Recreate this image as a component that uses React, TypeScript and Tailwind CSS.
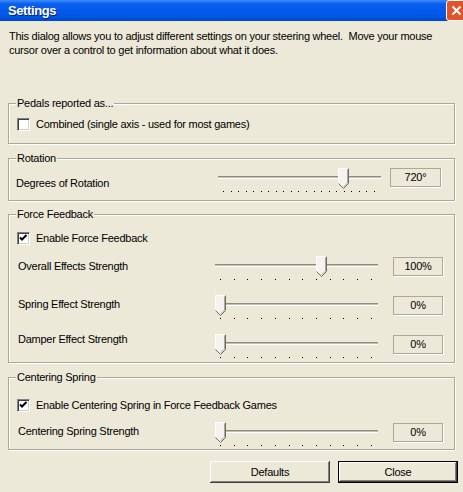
import type { ReactNode } from 'react';

function Thumb() {
  return (
    <svg width="11" height="21" viewBox="0 0 11 21">
      <path d="M0.5 0.5 H10.5 V15.5 L5.5 20.5 L0.5 15.5 Z" fill="#f4f3ee" />
      <path d="M0.5 15.5 V0.5 H10.5" fill="none" stroke="#ffffff" />
      <path d="M10.5 0.5 V15.5 L5.5 20.5 L0.5 15.5" fill="none" stroke="#716f64" />
      <path d="M9.5 1.5 V15 L5.5 19" fill="none" stroke="#aca899" />
    </svg>
  );
}

function Slider({ frac, ticks }: { frac: number; ticks: number }) {
  return (
    <div className="relative w-[163px] h-[25px] shrink-0">
      <div className="absolute left-0 right-0 top-[8px] h-[3px] border-t border-t-[#8e8c80] bg-[#c4c1b2] border-b border-b-white" />
      <div className="absolute top-0" style={{ left: Math.round(frac * 152) }}>
        <Thumb />
      </div>
      <div className="absolute left-[5px] right-[6px] top-[23px] flex justify-between">
        {Array.from({ length: ticks }).map((_, i) => (
          <span key={i} className="block w-px h-px bg-black" />
        ))}
      </div>
    </div>
  );
}

function ValueBox({ children }: { children: ReactNode }) {
  return (
    <div className="h-[19px] border border-[#aca899] shadow-[1px_1px_0_#ffffff] flex items-center justify-center leading-none shrink-0">
      {children}
    </div>
  );
}

function CheckBox({ checked }: { checked?: boolean }) {
  return (
    <span className="block w-[13px] h-[13px] bg-white border-t border-l border-t-[#808080] border-l-[#808080] border-b border-r border-b-white border-r-white shadow-[inset_1px_1px_0_#404040,inset_-1px_-1px_0_#d4d0c8] shrink-0">
      {checked && (
        <svg width="11" height="11" viewBox="0 0 11 11">
          <path d="M2 4.5 L4 6.5 L8.5 2" fill="none" stroke="#000" strokeWidth="2" />
        </svg>
      )}
    </span>
  );
}

function Group({ title, className, children }: { title: string; className: string; children: ReactNode }) {
  return (
    <div className={`relative border border-[#aca899] shadow-[1px_1px_0_#ffffff,inset_1px_1px_0_#ffffff] ${className}`}>
      <span className="absolute -top-[8px] left-[7px] px-[1px] bg-[#ece9d8] leading-[14px]">{title}</span>
      {children}
    </div>
  );
}

export default function App() {
  return (
    <div className="w-[463px] h-[492px] bg-[#ece9d8] flex flex-col overflow-hidden text-[11px] tracking-[-0.25px] text-black font-['Liberation_Sans',Arial,sans-serif]">
      {/* Title bar */}
      <div className="h-[21px] shrink-0 flex items-center justify-between pl-[8px] bg-[linear-gradient(180deg,#3d8cff_0%,#0a5ff0_18%,#0055e5_80%,#0047c9_100%)]">
        <span className="text-white font-bold text-[13px] tracking-[-0.4px] [text-shadow:1px_1px_0_#0a1e80]">Settings</span>
        <div className="w-[21px] h-[21px] mr-[-4px] rounded-[3px] border border-white bg-[#e2532b] flex items-center justify-center">
          <svg width="11" height="11" viewBox="0 0 11 11">
            <path d="M1.5 1.5 L9.5 9.5 M9.5 1.5 L1.5 9.5" stroke="#fff" strokeWidth="2" />
          </svg>
        </div>
      </div>

      <div className="flex flex-col px-[8px]">
        <p className="mt-[8px] pl-[1px] leading-[14px] whitespace-nowrap">
          This dialog allows you to adjust different settings on your steering wheel.&nbsp; Move your mouse
          <br />
          cursor over a control to get information about what it does.
        </p>

        {/* Pedals */}
        <Group title="Pedals reported as..." className="mt-[46px] h-[41px]">
          <div className="flex items-center gap-[6px] pl-[8px] pt-[13px]">
            <CheckBox />
            <span className="leading-[14px]">Combined (single axis - used for most games)</span>
          </div>
        </Group>

        {/* Rotation */}
        <Group title="Rotation" className="mt-[14px] h-[43px]">
          <div className="flex items-start pl-[7px] pt-[9px]">
            <span className="w-[202px] mt-[8px] leading-[14px]">Degrees of Rotation</span>
            <Slider frac={0.79} ticks={21} />
            <div className="ml-[9px] w-[51px]">
              <ValueBox>720°</ValueBox>
            </div>
          </div>
        </Group>

        {/* Force Feedback */}
        <Group title="Force Feedback" className="mt-[13px] h-[149px]">
          <div className="flex flex-col pt-[16px]">
            <div className="flex items-center gap-[6px] pl-[8px]">
              <CheckBox checked />
              <span className="leading-[14px]">Enable Force Feedback</span>
            </div>
            <div className="flex items-start pl-[9px] mt-[11px] h-[39px]">
              <span className="w-[197px] mt-[3px] leading-[14px]">Overall Effects Strength</span>
              <Slider frac={0.667} ticks={12} />
              <div className="ml-[15px] w-[50px] mt-[1px]">
                <ValueBox>100%</ValueBox>
              </div>
            </div>
            <div className="flex items-start pl-[9px] h-[39px]">
              <span className="w-[197px] mt-[2px] leading-[14px]">Spring Effect Strength</span>
              <Slider frac={0} ticks={12} />
              <div className="ml-[15px] w-[50px] mt-[1px]">
                <ValueBox>0%</ValueBox>
              </div>
            </div>
            <div className="flex items-start pl-[9px]">
              <span className="w-[197px] mt-[-2px] leading-[14px]">Damper Effect Strength</span>
              <Slider frac={0} ticks={12} />
              <div className="ml-[15px] w-[50px] mt-[1px]">
                <ValueBox>0%</ValueBox>
              </div>
            </div>
          </div>
        </Group>

        {/* Centering Spring */}
        <Group title="Centering Spring" className="mt-[14px] h-[73px]">
          <div className="flex flex-col pt-[20px]">
            <div className="flex items-center gap-[6px] pl-[8px]">
              <CheckBox checked />
              <span className="leading-[14px]">Enable Centering Spring in Force Feedback Games</span>
            </div>
            <div className="flex items-start pl-[9px] mt-[10px]">
              <span className="w-[197px] mt-[2px] leading-[14px]">Centering Spring Strength</span>
              <Slider frac={0} ticks={12} />
              <div className="ml-[15px] w-[50px] mt-[1px]">
                <ValueBox>0%</ValueBox>
              </div>
            </div>
          </div>
        </Group>
      </div>

      {/* Buttons */}
      <div className="flex gap-[8px] pl-[210px] mt-[11px]">
        <button className="w-[120px] h-[22px] bg-[#ece9d8] shadow-[inset_-1px_-1px_0_#404040,inset_1px_1px_0_#ffffff,inset_-2px_-2px_0_#808080] leading-none">
          Defaults
        </button>
        <button className="w-[120px] h-[22px] bg-[#ece9d8] border border-black shadow-[inset_-1px_-1px_0_#404040,inset_1px_1px_0_#ffffff,inset_-2px_-2px_0_#808080] leading-none">
          Close
        </button>
      </div>
    </div>
  );
}
